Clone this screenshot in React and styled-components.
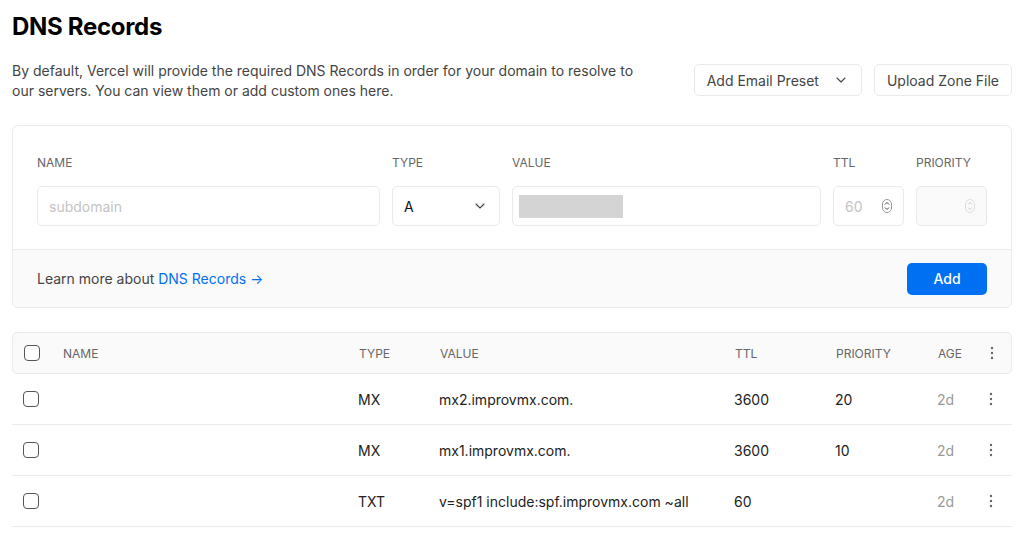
import React from 'react';
import styled, { createGlobalStyle } from 'styled-components';

const Global = createGlobalStyle`
  body {
    margin: 0;
    background: #fff;
    font-family: Inter, "Noto Sans", sans-serif;
    color: #111;
  }
`;

const Page = styled.div`
  padding: 11px 20px 0 12px;
`;

const Title = styled.h1`
  margin: 0;
  font-size: 24px;
  line-height: 32px;
  font-weight: 700;
  letter-spacing: -0.3px;
  color: #000;
`;

const Intro = styled.div`
  display: flex;
  align-items: center;
  justify-content: space-between;
  margin-top: 18px;
`;

const Lead = styled.p`
  margin: 0;
  width: 640px;
  font-size: 14px;
  line-height: 20px;
  color: #444;
`;

const Actions = styled.div`
  display: flex;
  gap: 12px;
  margin-top: -2px;
`;

const GhostButton = styled.button`
  display: flex;
  align-items: center;
  gap: 14px;
  height: 32px;
  padding: 0 12px;
  background: #fff;
  border: 1px solid #eaeaea;
  border-radius: 5px;
  font-family: inherit;
  font-size: 14px;
  color: #444;
`;

const Card = styled.div`
  margin-top: 24px;
  border: 1px solid #eaeaea;
  border-radius: 6px;
  overflow: hidden;
`;

const Fields = styled.div`
  display: grid;
  grid-template-columns: 343px 108px 309px 71px 71px;
  column-gap: 12px;
  padding: 29px 24px 23px;
`;

const Field = styled.div`
  display: flex;
  flex-direction: column;
  gap: 15px;
`;

const Label = styled.span`
  font-size: 12px;
  line-height: 16px;
  color: #666;
  text-transform: uppercase;
`;

const InputBox = styled.div`
  display: flex;
  align-items: center;
  justify-content: ${p => (p.$end ? 'flex-end' : 'space-between')};
  height: 40px;
  box-sizing: border-box;
  padding: 0 ${p => (p.$tight ? '6px' : '11px')};
  border: 1px solid #eaeaea;
  border-radius: 5px;
  background: ${p => (p.$disabled ? '#fafafa' : '#fff')};
  font-size: 14px;
  color: ${p => (p.$muted ? '#c4c4c4' : '#111')};
`;

const Redacted = styled.div`
  width: 104px;
  height: 23px;
  background: #d4d4d4;
`;

const Footer = styled.div`
  display: flex;
  align-items: center;
  justify-content: space-between;
  height: 57px;
  padding: 0 24px;
  background: #fafafa;
  border-top: 1px solid #eaeaea;
  font-size: 14px;
  color: #444;
`;

const Link = styled.a`
  color: #0070f3;
  text-decoration: none;
`;

const PrimaryButton = styled.button`
  width: 80px;
  height: 32px;
  border: none;
  border-radius: 5px;
  background: #0070f3;
  color: #fff;
  font-family: inherit;
  font-size: 14px;
  font-weight: 500;
`;

const Table = styled.div`
  margin-top: 24px;
`;

const Row = styled.div`
  display: grid;
  grid-template-columns: 50px 296px 81px 295px 101px 102px 46px 29px;
  align-items: center;
  box-sizing: border-box;
  height: ${p => (p.$head ? '42px' : '51px')};
  background: ${p => (p.$head ? '#fafafa' : '#fff')};
  border: ${p => (p.$head ? '1px solid #eaeaea' : 'none')};
  border-bottom: 1px solid #eaeaea;
  border-radius: ${p => (p.$head ? '5px' : '0')};
  font-size: ${p => (p.$head ? '12px' : '14px')};
  color: ${p => (p.$head ? '#666' : '#222')};
  text-transform: ${p => (p.$head ? 'uppercase' : 'none')};
`;

const Cell = styled.span`
  color: ${p => (p.$faded ? '#999' : 'inherit')};
  white-space: nowrap;
`;

const Check = styled.span`
  display: block;
  width: 16px;
  height: 16px;
  box-sizing: border-box;
  margin-left: 11px;
  border: 1px solid #555;
  border-radius: 4px;
  background: #fff;
`;

const Chevron = () => (
  <svg width="16" height="16" viewBox="0 0 24 24" fill="none" stroke="#444" strokeWidth="1.6" strokeLinecap="round" strokeLinejoin="round">
    <path d="M6 9l6 6 6-6" />
  </svg>
);

const Spinner = ({ faint }) => (
  <svg width="10" height="14" viewBox="0 0 10 14" fill="none">
    <rect x="0.5" y="0.5" width="9" height="13" rx="4.5" stroke={faint ? '#ddd' : '#999'} />
    <path d="M3 5.5l2-2 2 2M3 8.5l2 2 2-2" stroke={faint ? '#ccc' : '#444'} strokeWidth="1" />
  </svg>
);

const Dots = () => (
  <svg width="16" height="16" viewBox="0 0 16 16" fill="#666">
    <circle cx="8" cy="3" r="1.2" />
    <circle cx="8" cy="8" r="1.2" />
    <circle cx="8" cy="13" r="1.2" />
  </svg>
);

const records = [
  { type: 'MX', value: 'mx2.improvmx.com.', ttl: '3600', priority: '20', age: '2d' },
  { type: 'MX', value: 'mx1.improvmx.com.', ttl: '3600', priority: '10', age: '2d' },
  { type: 'TXT', value: 'v=spf1 include:spf.improvmx.com ~all', ttl: '60', priority: '', age: '2d' },
];

export default function App() {
  return (
    <Page>
      <Global />
      <Title>DNS Records</Title>
      <Intro>
        <Lead>
          By default, Vercel will provide the required DNS Records in order for your domain to resolve to
          our servers. You can view them or add custom ones here.
        </Lead>
        <Actions>
          <GhostButton>Add Email Preset <Chevron /></GhostButton>
          <GhostButton>Upload Zone File</GhostButton>
        </Actions>
      </Intro>

      <Card>
        <Fields>
          <Field>
            <Label>Name</Label>
            <InputBox $muted>subdomain</InputBox>
          </Field>
          <Field>
            <Label>Type</Label>
            <InputBox>A <Chevron /></InputBox>
          </Field>
          <Field>
            <Label>Value</Label>
            <InputBox $tight><Redacted /></InputBox>
          </Field>
          <Field>
            <Label>TTL</Label>
            <InputBox $muted>60 <Spinner /></InputBox>
          </Field>
          <Field>
            <Label>Priority</Label>
            <InputBox $disabled $end><Spinner faint /></InputBox>
          </Field>
        </Fields>
        <Footer>
          <span>Learn more about <Link href="#">DNS Records →</Link></span>
          <PrimaryButton>Add</PrimaryButton>
        </Footer>
      </Card>

      <Table>
        <Row $head>
          <Check />
          <Cell>Name</Cell>
          <Cell>Type</Cell>
          <Cell>Value</Cell>
          <Cell>TTL</Cell>
          <Cell>Priority</Cell>
          <Cell>Age</Cell>
          <Dots />
        </Row>
        {records.map((r, i) => (
          <Row key={i}>
            <Check />
            <Cell />
            <Cell>{r.type}</Cell>
            <Cell>{r.value}</Cell>
            <Cell>{r.ttl}</Cell>
            <Cell>{r.priority}</Cell>
            <Cell $faded>{r.age}</Cell>
            <Dots />
          </Row>
        ))}
      </Table>
    </Page>
  );
}
